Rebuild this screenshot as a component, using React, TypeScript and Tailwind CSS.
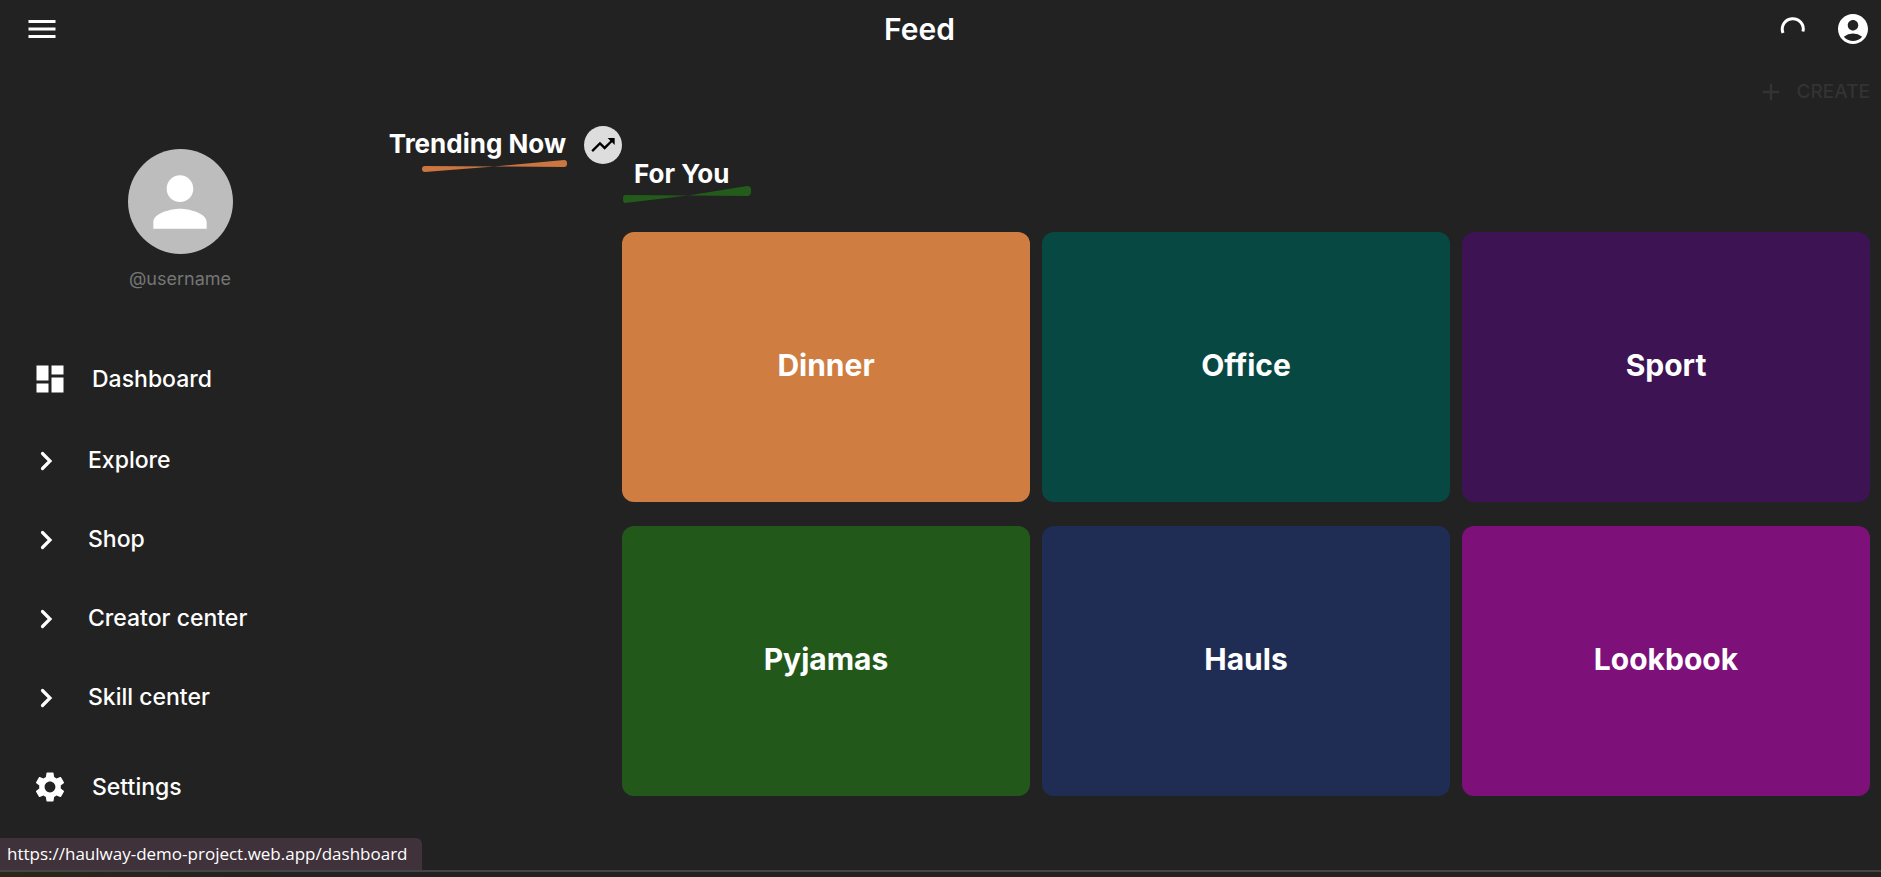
import { MdMenu, MdAccountCircle, MdAdd, MdPerson, MdDashboard, MdSettings, MdTrendingUp } from "react-icons/md";

const groups = ["Explore", "Shop", "Creator center", "Skill center"];

const categories = [
  { name: "Dinner", color: "bg-[#cf7d41]" },
  { name: "Office", color: "bg-[#084842]" },
  { name: "Sport", color: "bg-[#3d1354]" },
  { name: "Pyjamas", color: "bg-[#22591b]" },
  { name: "Hauls", color: "bg-[#1f2d55]" },
  { name: "Lookbook", color: "bg-[#7e1079]" },
];

function Header() {
  return (
    <header className="flex h-[58px] items-center justify-between pr-2.5 pl-6">
      <button aria-label="Open menu">
        <MdMenu className="size-9" />
      </button>
      <h1 className="text-3xl leading-9 font-semibold">Feed</h1>
      <div className="flex items-center gap-6">
        <svg role="status" aria-label="Loading" className="size-8" viewBox="0 0 32 32" fill="none">
          <path d="M4 20A10.5 10.5 0 1 1 24 18.5" stroke="white" strokeWidth="3" />
        </svg>
        <button aria-label="Account">
          <MdAccountCircle className="size-9" />
        </button>
      </div>
    </header>
  );
}

function Chevron() {
  return (
    <svg className="size-9" viewBox="0 0 36 36" fill="none" stroke="white" strokeWidth="3.2" strokeLinecap="round">
      <path d="M14.5 10.5L22 18L14.5 25.5" />
    </svg>
  );
}

function Sidebar() {
  return (
    <nav className="w-[360px] shrink-0 text-[23px] font-medium">
      <div className="flex flex-col items-center pt-[91px] pb-[60px]">
        <span className="flex size-[105px] items-center justify-center rounded-full bg-[#bdbdbd]">
          <MdPerson className="size-20" />
        </span>
        <span className="mt-[11px] text-lg leading-7 font-normal text-[#757575]">@username</span>
      </div>
      <a href="#dashboard" className="flex h-[52px] items-center gap-6 pl-8">
        <MdDashboard className="size-9" />
        Dashboard
      </a>
      <ul className="pt-4 pb-6">
        {groups.map((name) => (
          <li key={name}>
            <button className="flex h-[79px] w-full items-center gap-6 pl-7">
              <Chevron />
              {name}
            </button>
          </li>
        ))}
      </ul>
      <a href="#settings" className="flex h-[52px] items-center gap-6 pl-8">
        <MdSettings className="size-9" />
        Settings
      </a>
    </nav>
  );
}

function Trending() {
  return (
    <section className="w-[262px] shrink-0 pt-[68px]">
      <div className="flex items-center justify-end gap-[18px]">
        <h2 className="pb-0.5 text-[26px] leading-9 font-bold whitespace-nowrap">Trending Now</h2>
        <span className="flex size-[38px] items-center justify-center rounded-full bg-[#dddddd]">
          <MdTrendingUp className="size-7 text-black" />
        </span>
      </div>
      <svg className="-mt-1 ml-[62px] h-3 w-[145px]" viewBox="0 0 145 12" fill="#cb7541">
        <path d="M3 6L72 6.5L3 12Q0 12 0 9Q0 6 3 6Z" />
        <path d="M72 6.5L142 0Q145 0 145 3V4Q145 7 142 7Z" />
      </svg>
    </section>
  );
}

function ForYou() {
  return (
    <section className="min-w-0 flex-1 pr-[11px]">
      <div className="flex justify-end pt-4">
        <button disabled className="flex h-9 items-center gap-3 text-[19px] font-medium text-[#333333]">
          <MdAdd className="size-7" />
          CREATE
        </button>
      </div>
      <h2 className="mt-[46px] pl-3 text-[26px] leading-9 font-bold">For You</h2>
      <svg className="-mt-1.5 h-[17px] w-[129px]" viewBox="0 0 129 17" fill="#235b1b">
        <path d="M3 9L66 9.5L3 17Q1 17 1 13Q1 9 3 9Z" />
        <path d="M66 9.5L125 0Q129 0 129 3V6Q129 10 125 10Z" />
      </svg>
      <div className="mt-[29px] grid grid-cols-3 gap-x-3 gap-y-6">
        {categories.map(({ name, color }) => (
          <a
            key={name}
            href={`#${name.toLowerCase()}`}
            className={`flex h-[270px] items-center justify-center rounded-xl pb-1 text-3xl font-bold ${color}`}
          >
            {name}
          </a>
        ))}
      </div>
    </section>
  );
}

export default function App() {
  return (
    <div className="relative flex min-h-screen flex-col bg-[#222222] font-[Inter,sans-serif] text-white">
      <Header />
      <main className="flex flex-1">
        <Sidebar />
        <Trending />
        <ForYou />
      </main>
      <footer className="h-[7px] border-t-2 border-[#454545] bg-linear-to-r from-[#2b2718] via-[#222222] via-15% to-[#242120]" />
      <div className="absolute bottom-[7px] left-0 flex h-8 items-center rounded-tr-md bg-[#3f323b] pr-3.5 pl-[7px] font-['Open_Sans',sans-serif] text-[17px]">
        https://haulway-demo-project.web.app/dashboard
      </div>
    </div>
  );
}
